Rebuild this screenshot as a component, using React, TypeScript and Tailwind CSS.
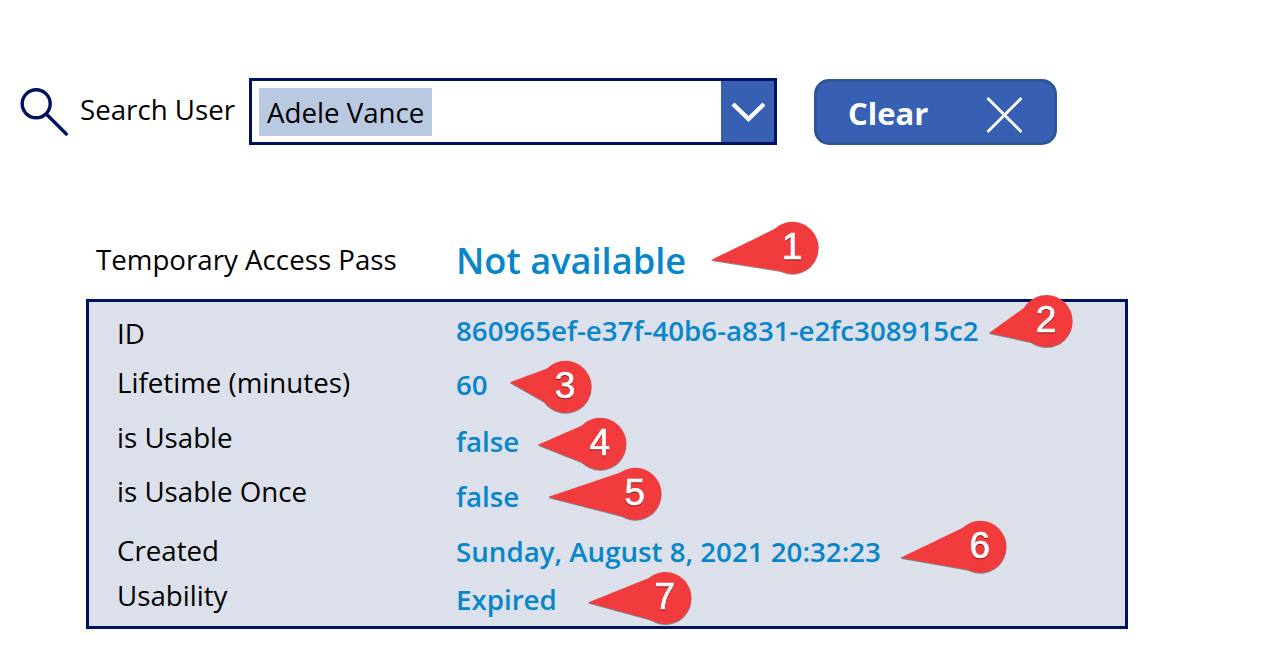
import React from "react";

const fields = [
  { label: "ID", value: "860965ef-e37f-40b6-a831-e2fc308915c2", labelGap: "mt-[11px]", valueGap: "mt-2" },
  { label: "Lifetime (minutes)", value: "60", labelGap: "mt-[9px]", valueGap: "mt-[14px]" },
  { label: "is Usable", value: "false", labelGap: "mt-[15px]", valueGap: "mt-[17px]" },
  { label: "is Usable Once", value: "false", labelGap: "mt-[14px]", valueGap: "mt-[15px]" },
  { label: "Created", value: "Sunday, August 8, 2021 20:32:23", labelGap: "mt-[19px]", valueGap: "mt-[15px]" },
  { label: "Usability", value: "Expired", labelGap: "mt-[5px]", valueGap: "mt-2" },
];

// cx/cy is the centre of the bubble, tipX/tipY is where it points
const callouts = [
  { n: 1, cx: 792.5, cy: 247.8, tipX: 711, tipY: 260 },
  { n: 2, cx: 1046.5, cy: 321, tipX: 989, tipY: 333 },
  { n: 3, cx: 565.5, cy: 386.8, tipX: 510, tipY: 382.3 },
  { n: 4, cx: 600.3, cy: 443.8, tipX: 538, tipY: 444.8 },
  { n: 5, cx: 635.4, cy: 493.8, tipX: 548, tipY: 497 },
  { n: 6, cx: 980.4, cy: 546.8, tipX: 900.5, tipY: 557.8 },
  { n: 7, cx: 665.4, cy: 598, tipX: 588, tipY: 602.5 },
];

const RADIUS = 26;

const Callout = ({ n, cx, cy, tipX, tipY }: (typeof callouts)[number]) => {
  const dx = cx - tipX;
  const dy = cy - tipY;
  const len = Math.hypot(dx, dy);
  const ox = (-dy / len) * RADIUS;
  const oy = (dx / len) * RADIUS;
  return (
    <g>
      <g fill="#f23b3d" className="drop-shadow-[0_1px_0.5px_rgba(40,40,40,0.5)]">
        <circle cx={cx} cy={cy} r={RADIUS} />
        <path d={`M${tipX} ${tipY}L${cx + ox} ${cy + oy}L${cx - ox} ${cy - oy}Z`} />
      </g>
      <text
        x={cx - 0.5}
        y={cy + 11.2}
        textAnchor="middle"
        fill="white"
        stroke="white"
        strokeWidth="0.7"
        className="font-['Liberation_Sans',sans-serif] text-[37px] drop-shadow-[0.5px_1px_0.5px_rgba(60,0,0,0.6)]"
      >
        {n}
      </text>
    </g>
  );
};

const SearchBar = () => (
  <div className="flex h-[67px] items-start">
    <svg className="mt-2 ml-[18px] h-[52px] w-[52px] shrink-0" viewBox="0 0 52 52" fill="none" stroke="#00125f" strokeWidth="3.4" strokeLinecap="round">
      <circle cx="18.2" cy="17.8" r="14" />
      <path d="M28.3 28L48.3 48" />
    </svg>
    <label className="mt-[11px] ml-[10px] w-[169px] text-[27.7px] leading-[40px] whitespace-nowrap">Search User</label>
    <div className="flex h-[67px] w-[528px] border-[3px] border-[#00125f] bg-white">
      <div className="flex-1 pt-[7px] pl-[7px]">
        <span className="block h-12 w-[173px] bg-[#b9c9e1] pl-2 text-[27.7px] leading-[49px] whitespace-nowrap">Adele Vance</span>
      </div>
      <button className="flex w-[53px] items-center justify-center bg-[#3860b2]">
        <svg className="h-[22px] w-[34px]" viewBox="0 0 34 22" fill="none" stroke="white" strokeWidth="4.4">
          <path d="M2 3L17.5 18L33 3" />
        </svg>
      </button>
    </div>
    <button className="mt-[1px] ml-[37px] flex h-[66px] w-[243px] items-center justify-between rounded-[15px] border-[3px] border-[#2f5597] bg-[#3860b2] pr-8 pl-[31px] text-white">
      <span className="mt-[2px] text-[31px] leading-[44px] font-bold">Clear</span>
      <svg className="mt-[5px] h-9 w-9" viewBox="0 0 36 36" fill="none" stroke="white" strokeWidth="2.8">
        <path d="M1.5 1L35.5 35M35.5 1L1.5 35" />
      </svg>
    </button>
  </div>
);

export default function App() {
  return (
    <div className="relative h-[664px] w-[1267px] overflow-hidden bg-white pt-[78px] font-['Open_Sans',sans-serif] text-black">
      <SearchBar />

      <section className="mt-[90px] flex h-[64px] pl-24">
        <span className="mt-1 w-[360px] text-[27.7px] leading-[40px]">Temporary Access Pass</span>
        <span className="text-[36.2px] leading-[50px] font-semibold text-[#0886ca]">Not available</span>
      </section>

      <section className="ml-[86px] flex h-[330px] w-[1042px] border-[3px] border-[#00125f] bg-[#dce0eb] pl-7 text-[27.7px] leading-[40px]">
        <div className="w-[339px]">
          {fields.map((field) => (
            <div key={field.label} className={field.labelGap}>{field.label}</div>
          ))}
        </div>
        <div className="font-semibold text-[#0886ca]">
          {fields.map((field) => (
            <div key={field.label} className={field.valueGap}>{field.value}</div>
          ))}
        </div>
      </section>

      {/* Numbered annotations */}
      <svg className="pointer-events-none absolute inset-0" width="1267" height="664" viewBox="0 0 1267 664">
        {callouts.map((callout) => (
          <Callout key={callout.n} {...callout} />
        ))}
      </svg>
    </div>
  );
}
